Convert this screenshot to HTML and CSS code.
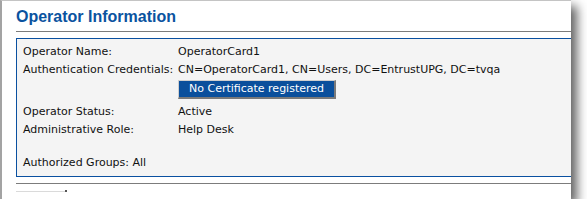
FILE: index.html
```html
<!DOCTYPE html>
<html lang="en">
<head>
    <meta charset="UTF-8">
    <meta name="viewport" content="width=device-width, initial-scale=1.0">
    <title>Operator Information</title>
    <link rel="stylesheet" href="styles.css">
</head>
<body>
    <div class="frame">
        <h1 class="title">Operator Information</h1>
        <div class="rule"></div>
        <div class="details">
            <div class="grid">
                <span class="label">Operator Name:</span>
                <span class="value">OperatorCard1</span>
                <span class="label">Authentication Credentials:</span>
                <span class="value">CN=OperatorCard1, CN=Users, DC=EntrustUPG, DC=tvqa</span>
                <span class="label"></span>
                <span class="value cert-row"><span class="cert">No Certificate registered</span></span>
                <span class="label">Operator Status:</span>
                <span class="value">Active</span>
                <span class="label">Administrative Role:</span>
                <span class="value">Help Desk</span>
            </div>
            <p class="groups">Authorized Groups: All</p>
        </div>
        <div class="rule rule-bottom"></div>
        <div class="stub"></div>
    </div>
</body>
</html>
```

FILE: styles.css
```css
*{
    margin: 0;
    padding: 0;
    box-sizing: border-box;
}
body{
    background-color: #fff;
    font-family: "DejaVu Sans", Verdana, sans-serif;
    font-size: 11px;
    color: #111;
}
.frame{
    width: 571px;
    height: 199px;
    background-color: #fff;
    border-top: 1px solid #c4c4c4;
    border-left: 2px solid #a3a3a3;
    padding-left: 14px;
    box-shadow: 6px 6px 10px rgba(0,0,0,0.62);
}
.title{
    margin-top: 6px;
    font-family: "Liberation Sans", Arial, sans-serif;
    font-size: 16px;
    line-height: 20px;
    font-weight: bold;
    color: #0a539f;
}
.rule{
    margin-top: 4px;
    height: 1px;
    background-color: #7c7c7c;
}
.rule-bottom{
    margin-top: 6px;
}
.details{
    margin-top: 6px;
    background-color: #f4f4f4;
    border: 1px solid #0a50a0;
    border-right: none;
    padding: 4px 0 4px 6px;
    line-height: 18px;
}
.grid{
    display: grid;
    grid-template-columns: 155px 1fr;
}
.cert-row{
    height: 24px;
    padding-top: 1px;
}
.cert{
    display: inline-block;
    height: 19px;
    line-height: 16px;
    padding: 0 10px;
    background-color: #0a4f9c;
    color: #fff;
    border-style: solid;
    border-width: 1px 2px 2px 1px;
    border-color: #cfcfcf #7a7a7a #7a7a7a #cfcfcf;
}
.groups{
    margin-top: 15px;
}
.stub{
    margin-top: 7px;
    width: 51px;
    height: 1px;
    background-color: #dadada;
    position: relative;
}
.stub::after{
    content: "";
    position: absolute;
    right: 0;
    top: -1px;
    width: 2px;
    height: 2px;
    background-color: #555;
}
```
